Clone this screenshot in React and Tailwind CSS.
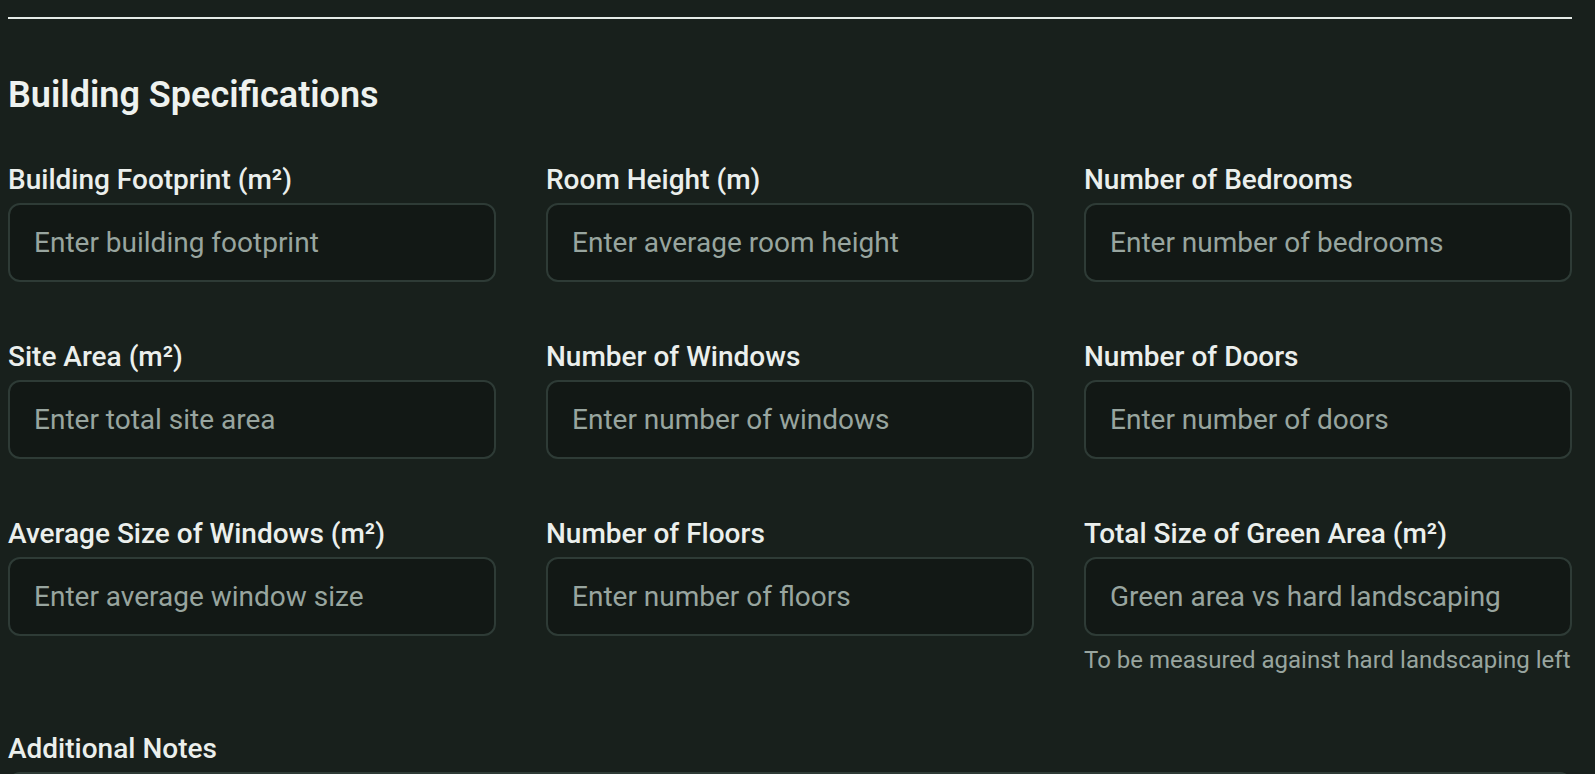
import { useState } from 'react';

const fields = [
  { name: 'footprint', label: 'Building Footprint (m²)', placeholder: 'Enter building footprint' },
  { name: 'roomHeight', label: 'Room Height (m)', placeholder: 'Enter average room height' },
  { name: 'bedrooms', label: 'Number of Bedrooms', placeholder: 'Enter number of bedrooms' },
  { name: 'siteArea', label: 'Site Area (m²)', placeholder: 'Enter total site area' },
  { name: 'windows', label: 'Number of Windows', placeholder: 'Enter number of windows' },
  { name: 'doors', label: 'Number of Doors', placeholder: 'Enter number of doors' },
  { name: 'windowSize', label: 'Average Size of Windows (m²)', placeholder: 'Enter average window size' },
  { name: 'floors', label: 'Number of Floors', placeholder: 'Enter number of floors' },
  {
    name: 'greenArea',
    label: 'Total Size of Green Area (m²)',
    placeholder: 'Green area vs hard landscaping',
    hint: 'To be measured against hard landscaping left',
  },
];

export default function App() {
  const [formData, setFormData] = useState({});

  // Handle input changes
  const handleChange = (e) => {
    const { name, value } = e.target;
    setFormData((prev) => ({ ...prev, [name]: value }));
  };

  return (
    <div
      className="min-h-screen bg-[#18201c] pl-[8px] pr-[23px] pt-[17px] text-[#eef2ef]"
      style={{ fontFamily: 'Roboto, "Noto Sans", sans-serif' }}
    >
      <div className="h-[2px] w-full bg-[#e4ebe7]" />

      <h2 className="mt-[55px] text-[36px] font-semibold leading-[42px] text-[#eef2ef]">
        Building Specifications
      </h2>

      <div className="mt-[43px] grid grid-cols-3 gap-x-[50px] gap-y-[54px]">
        {fields.map((f) => (
          <div key={f.name} className="flex flex-col">
            <label className="mb-[2px] text-[28px] font-medium leading-[42px] text-[#ebefec]">
              {f.label}
            </label>
            <input
              name={f.name}
              type="text"
              placeholder={f.placeholder}
              value={formData[f.name] || ''}
              onChange={handleChange}
              className="h-[79px] w-full rounded-[12px] border-2 border-[#2e3b36] bg-[#121815] px-[24px] text-[28px] text-[#eef2ef] outline-none placeholder:text-[#98a59f]"
            />
            {f.hint && (
              <p className="mt-[7px] whitespace-nowrap text-[24px] leading-[35px] text-[#98a59f]">
                {f.hint}
              </p>
            )}
          </div>
        ))}
      </div>

      <div className="mt-[50px] flex flex-col">
        <label className="mb-[2px] text-[28px] font-medium leading-[42px] text-[#ebefec]">
          Additional Notes
        </label>
        <textarea
          name="notes"
          rows={4}
          value={formData.notes || ''}
          onChange={handleChange}
          className="w-full rounded-[12px] border-2 border-[#2e3b36] bg-[#121815] px-[24px] py-[16px] text-[28px] outline-none"
        />
      </div>
    </div>
  );
}
